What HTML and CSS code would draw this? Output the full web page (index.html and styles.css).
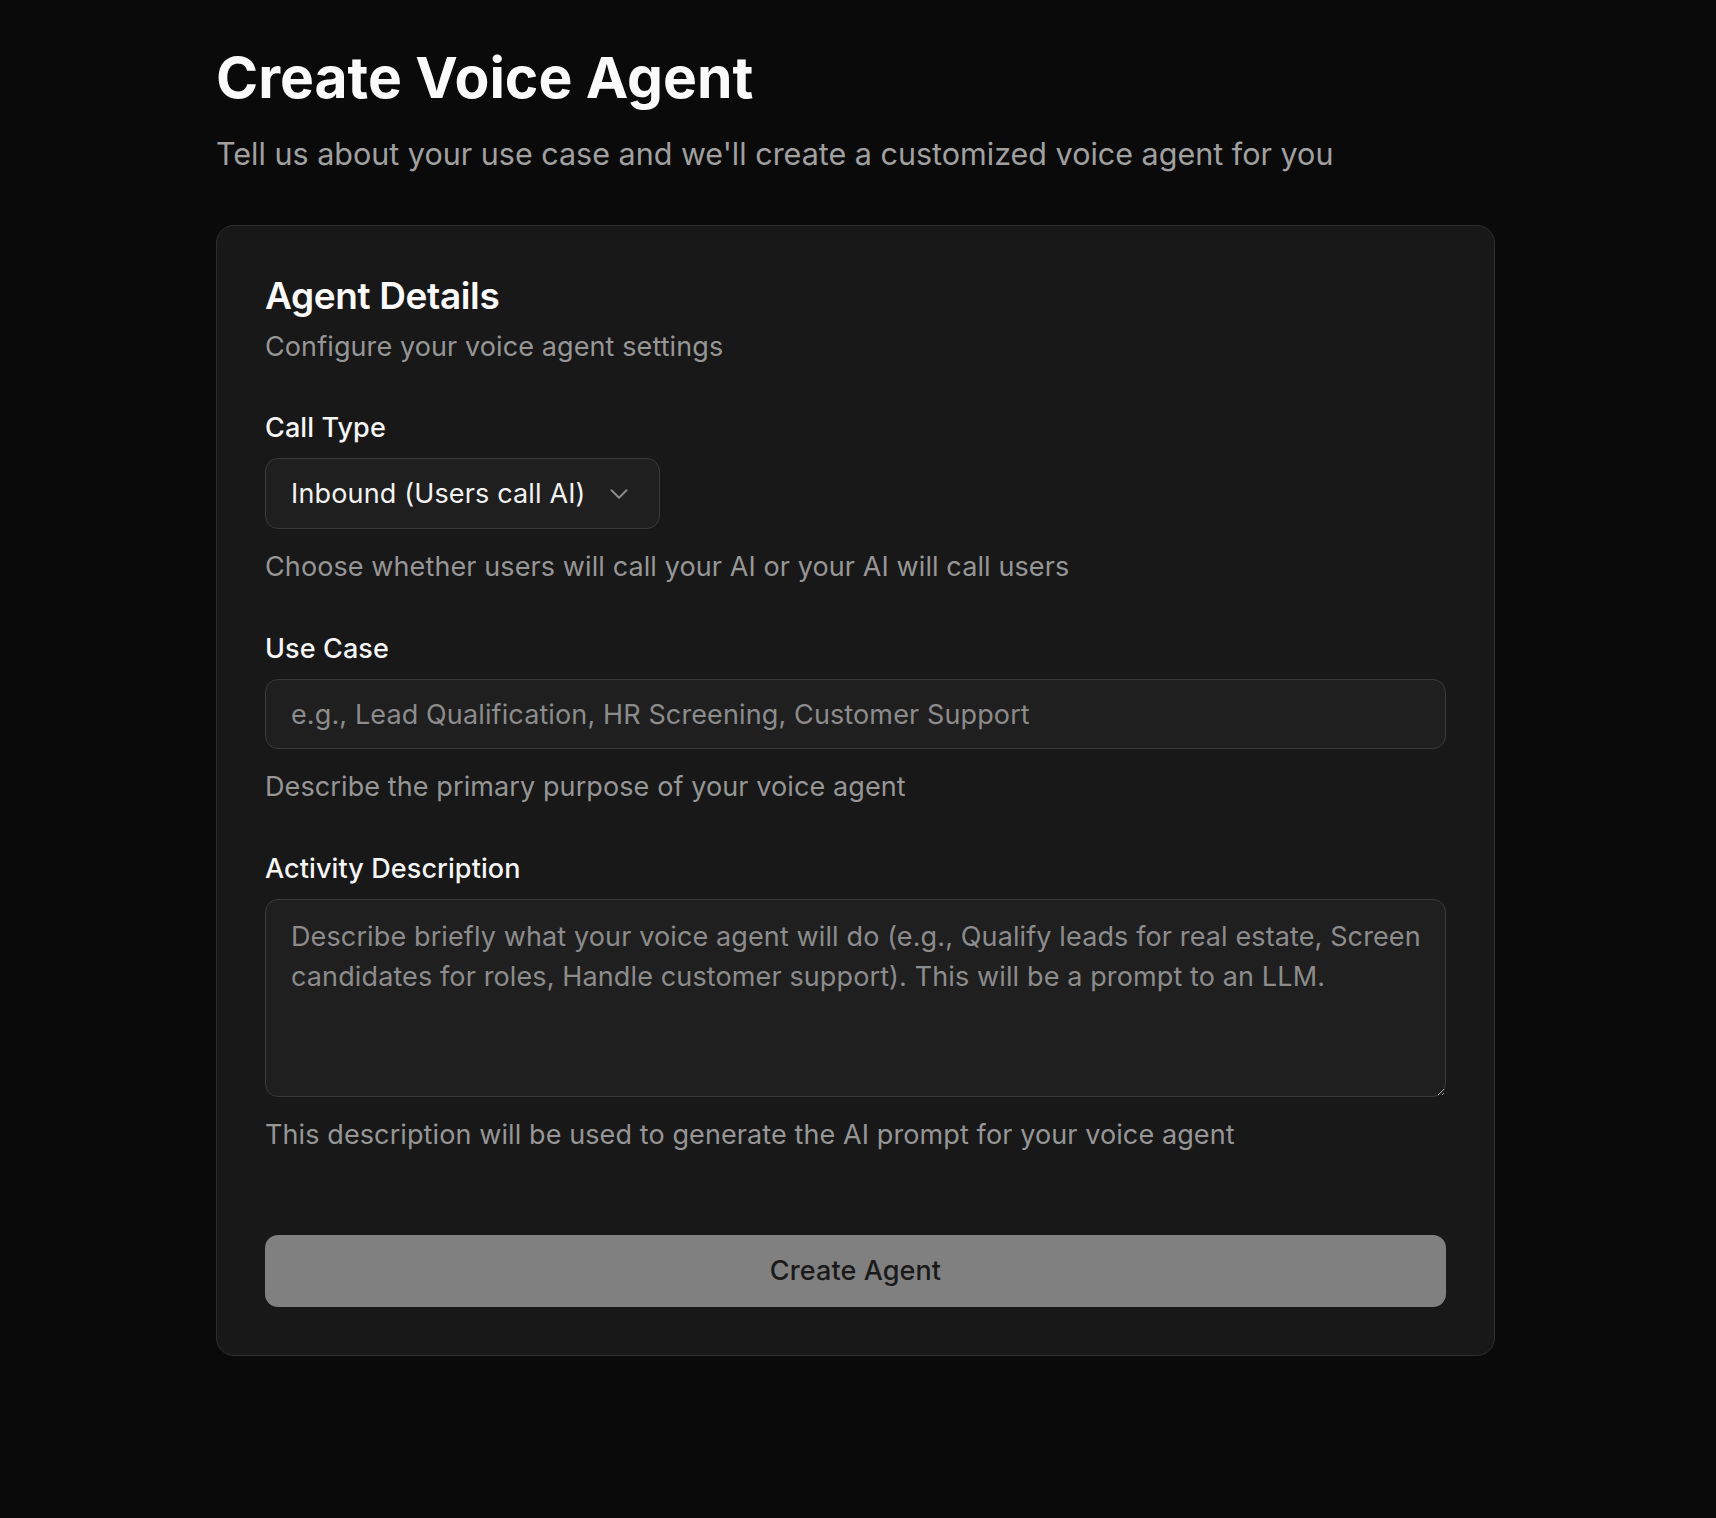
FILE: index.html
```html
<!DOCTYPE html>
<html lang="en">
<head>
<meta charset="utf-8">
<title>Create Voice Agent</title>
<link rel="stylesheet" href="styles.css">
</head>
<body>
<main class="page">
  <header class="page-header">
    <h1 class="title">Create Voice Agent</h1>
    <p class="subtitle">Tell us about your use case and we'll create a customized voice agent for you</p>
  </header>

  <section class="card">
    <div class="card-header">
      <h2 class="card-title">Agent Details</h2>
      <p class="card-desc">Configure your voice agent settings</p>
    </div>

    <form class="form">
      <div class="field">
        <label class="label">Call Type</label>
        <button type="button" class="select">
          <span>Inbound (Users call AI)</span>
          <svg class="chevron" viewBox="0 0 24 24" fill="none" stroke="currentColor" stroke-width="1.6" stroke-linecap="round" stroke-linejoin="round"><path d="m6 9 6 6 6-6"/></svg>
        </button>
        <p class="hint">Choose whether users will call your AI or your AI will call users</p>
      </div>

      <div class="field">
        <label class="label" for="usecase">Use Case</label>
        <input id="usecase" class="input" type="text" placeholder="e.g., Lead Qualification, HR Screening, Customer Support">
        <p class="hint">Describe the primary purpose of your voice agent</p>
      </div>

      <div class="field">
        <label class="label" for="activity">Activity Description</label>
        <textarea id="activity" class="textarea" placeholder="Describe briefly what your voice agent will do (e.g., Qualify leads for real estate, Screen&#10;candidates for roles, Handle customer support). This will be a prompt to an LLM."></textarea>
        <p class="hint">This description will be used to generate the AI prompt for your voice agent</p>
      </div>

      <button type="button" class="submit">Create Agent</button>
    </form>
  </section>
</main>
</body>
</html>
```

FILE: styles.css
```css
:root {
  color-scheme: dark;
}

* {
  box-sizing: border-box;
}

body {
  margin: 0;
  min-height: 100vh;
  background: #0a0a0a;
  color: #fafafa;
  font-family: Inter, "Noto Sans", sans-serif;
}

.page {
  padding: 44px 221px 120px 216px;
}

.page-header {
  display: flex;
  flex-direction: column;
}

.title {
  margin: 0;
  font-size: 57px;
  line-height: 68px;
  font-weight: 700;
  letter-spacing: 0;
  color: #fafafa;
}

.subtitle {
  margin: 22px 0 0;
  font-size: 30.5px;
  line-height: 40px;
  font-weight: 400;
  color: #a0a0a0;
}

.card {
  margin-top: 51px;
  background: #181818;
  border: 1px solid #2e2e2e;
  border-radius: 18px;
  padding: 48px;
  display: flex;
  flex-direction: column;
  gap: 41px;
}

.card-header {
  display: flex;
  flex-direction: column;
  gap: 10px;
}

.card-title {
  margin: 0;
  font-size: 37px;
  line-height: 43px;
  font-weight: 600;
  letter-spacing: -0.01em;
  color: #fafafa;
}

.card-desc {
  margin: 0;
  font-size: 27px;
  line-height: 40px;
  letter-spacing: 0.1px;
  color: #969696;
}

.form {
  display: flex;
  flex-direction: column;
  gap: 42px;
}

.field {
  display: flex;
  flex-direction: column;
}

.label {
  font-size: 27px;
  line-height: 40px;
  font-weight: 500;
  letter-spacing: 0.1px;
  color: #f5f5f5;
  margin-bottom: 10px;
}

.hint {
  margin: 18px 0 0;
  font-size: 27px;
  line-height: 40px;
  letter-spacing: 0.1px;
  color: #969696;
}

.select {
  align-self: flex-start;
  display: flex;
  align-items: center;
  gap: 18px;
  height: 71px;
  padding: 0 25px;
  background: #1f1f1f;
  border: 1px solid #3a3a3a;
  border-radius: 13px;
  color: #f2f2f2;
  font-family: inherit;
  font-size: 27px;
  line-height: 40px;
  font-weight: 400;
  letter-spacing: 0.15px;
  cursor: pointer;
}

.chevron {
  width: 30px;
  height: 30px;
  color: #8a8a8a;
  flex-shrink: 0;
}

.input,
.textarea {
  width: 100%;
  background: #1f1f1f;
  border: 1px solid #3a3a3a;
  border-radius: 13px;
  color: #f2f2f2;
  font-family: inherit;
  font-size: 27px;
  line-height: 40px;
  letter-spacing: 0.12px;
  outline: none;
}

.input {
  height: 70px;
  padding: 0 25px;
}

.textarea {
  display: block;
  height: 198px;
  padding: 17px 8px 17px 25px;
  resize: vertical;
}

.input::placeholder,
.textarea::placeholder {
  color: #8c8c8c;
  opacity: 1;
}

.submit {
  margin-top: 38px;
  height: 72px;
  width: 100%;
  background: #808080;
  border: none;
  border-radius: 13px;
  color: #1a1a1a;
  font-family: inherit;
  font-size: 27px;
  line-height: 40px;
  font-weight: 500;
  letter-spacing: 0.1px;
  cursor: pointer;
}
```
